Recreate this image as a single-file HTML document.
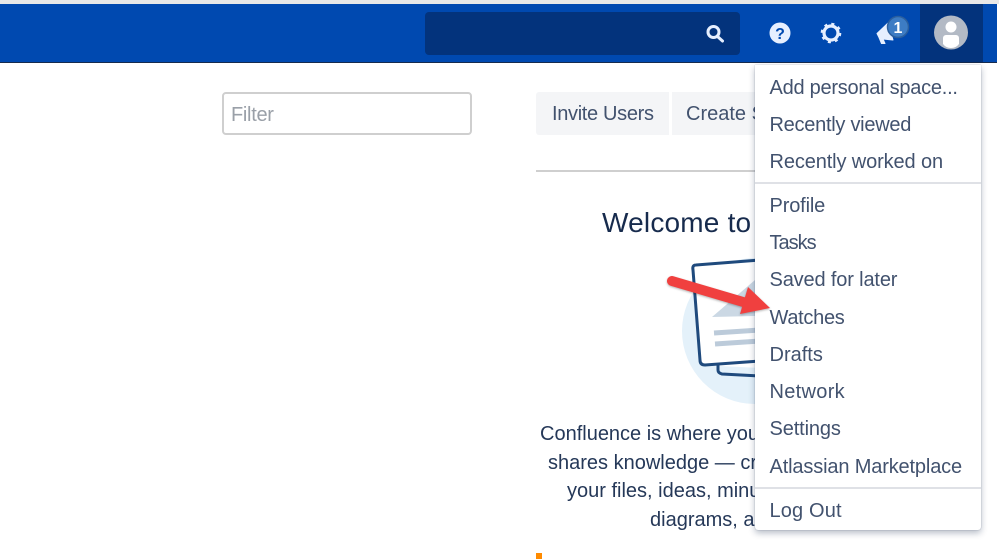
<!DOCTYPE html>
<html><head><meta charset="utf-8">
<style>
html,body{margin:0;padding:0;background:#fff;}
body{width:999px;height:559px;position:relative;overflow:hidden;font-family:"Liberation Sans",sans-serif;color:#253858;}
.a{position:absolute;white-space:nowrap;}
.mi{position:absolute;left:769.5px;font-size:20px;line-height:26px;color:#42526e;white-space:nowrap;}
.c{position:absolute;white-space:nowrap;font-size:20px;line-height:26px;color:#253858;}
</style></head><body>
<div class="a" style="left:0;top:0;width:999px;height:4px;background:#e8e8e8"></div>
<div class="a" style="left:0;top:4px;width:997px;height:58px;background:#0049b0"></div>
<div class="a" style="left:0;top:62px;width:997px;height:1px;background:#172b4d"></div>
<div class="a" style="left:425px;top:12px;width:315px;height:43px;background:#03337c;border-radius:4px"></div>
<svg class="a" style="left:0;top:0" width="999" height="64">
<g fill="none" stroke="#e6efff" stroke-width="3"><circle cx="713.500" cy="32" r="5.500"/><path d="M717.500 36.500l5 4.500" stroke-linecap="round"/></g>
<circle cx="780" cy="33" r="10.500" fill="#e6efff"/>
<text x="780" y="39" font-family="Liberation Sans" font-weight="700" font-size="16" text-anchor="middle" fill="#0049b0">?</text>
<circle cx="831" cy="33" r="7" fill="none" stroke="#e6efff" stroke-width="3.200"/>
<circle cx="831" cy="33" r="9" fill="none" stroke="#e6efff" stroke-width="2.600" stroke-dasharray="3 4.070"/>
<path d="M877 33.500L888 23L893 40L883 39L885 43.500L881.500 43.500L879 37.500Z" fill="#e6efff" stroke="#e6efff" stroke-linejoin="round"/>
<circle cx="898" cy="27" r="10.500" fill="#3d7cc4" stroke="#2b5f9e" stroke-width="1.500"/>
<text x="898" y="33" font-family="Liberation Sans" font-weight="700" font-size="16" text-anchor="middle" fill="#fff">1</text>
<rect x="920" y="4" width="63" height="58" fill="#03337c"/>
<circle cx="951" cy="32.500" r="17" fill="#b3bac5"/>
<circle cx="951" cy="27" r="5.500" fill="#fff"/>
<path d="M943 38a3 3 0 0 1 3-3h10a3 3 0 0 1 3 3v6q-3 4-8 4t-8-4z" fill="#fff"/>
</svg>

<div class="a" style="left:222px;top:92px;width:246px;height:39px;border:2px solid #cfcfcf;border-radius:4px;background:#fff"></div>
<div class="a" style="left:231px;top:102px;font-size:20px;line-height:26px;color:#9aa0a8;letter-spacing:-.3px">Filter</div>

<div class="a" style="left:536px;top:92px;width:133px;height:43px;background:#f4f5f7;border-radius:3px 0 0 3px"></div>
<div class="a" style="left:672px;top:92px;width:90px;height:43px;background:#f4f5f7"></div>
<div class="a" style="left:552px;top:101px;font-size:20px;line-height:26px;color:#42526e;letter-spacing:-.33px">Invite Users</div>
<div class="a" style="left:686px;top:101px;font-size:20px;line-height:26px;color:#42526e">Create S</div>
<div class="a" style="left:536px;top:170px;width:220px;height:2px;background:#cfcfcf"></div>

<div class="a" style="left:602px;top:205px;font-size:28px;line-height:36px;color:#172b4d;letter-spacing:.2px">Welcome to</div>

<svg class="a" style="left:660px;top:250px" width="110" height="160">
<circle cx="95" cy="81" r="73" fill="#e4f1fa"/>
<path d="M34 14L100 10V118L40 115Z" fill="#fff"/>
<path d="M100 10L36 15Q32 15 33 20L40 110Q40 115 45 115L100 111" fill="none" stroke="#1f4a7d" stroke-width="3"/>
<path d="M58 115L58 120Q58 123 62 124L100 126" fill="none" stroke="#1f4a7d" stroke-width="3"/>
<path d="M52 67L95 30V66Z" fill="#cbd8e4"/>
<path d="M54 83L100 80M55 94L100 91" stroke="#bccbda" stroke-width="5" fill="none"/>
</svg>

<div class="c" style="left:540px;top:421px">Confluence is where you</div>
<div class="c" style="left:548px;top:450px">shares knowledge — cr</div>
<div class="c" style="left:567px;top:478px">your files, ideas, minu</div>
<div class="c" style="left:650px;top:507px">diagrams, a</div>
<div class="a" style="left:536px;top:553px;width:6px;height:6px;background:#ff8b00"></div>

<div class="a" style="left:755px;top:65px;width:226px;height:465px;background:#fff;border-radius:0 0 3px 3px;box-shadow:0 3px 7px rgba(9,30,66,.3),0 0 1px rgba(9,30,66,.4)"></div>
<div class="a" style="left:755px;top:182px;width:226px;height:2px;background:#dfe1e6"></div>
<div class="a" style="left:755px;top:487px;width:226px;height:2px;background:#dfe1e6"></div>
<div class="mi" style="top:75px;letter-spacing:-.25px">Add personal space...</div>
<div class="mi" style="top:112px;letter-spacing:-.27px">Recently viewed</div>
<div class="mi" style="top:149px;letter-spacing:-.12px">Recently worked on</div>
<div class="mi" style="top:193px;letter-spacing:-.15px">Profile</div>
<div class="mi" style="top:230px;letter-spacing:-1px">Tasks</div>
<div class="mi" style="top:267px;letter-spacing:-.15px">Saved for later</div>
<div class="mi" style="top:305px;letter-spacing:-.3px">Watches</div>
<div class="mi" style="top:342px">Drafts</div>
<div class="mi" style="top:379px;letter-spacing:.3px">Network</div>
<div class="mi" style="top:416px;letter-spacing:-.12px">Settings</div>
<div class="mi" style="top:454px;letter-spacing:-.15px">Atlassian Marketplace</div>
<div class="mi" style="top:498px;letter-spacing:.15px">Log Out</div>

<svg class="a" style="left:660px;top:270px;filter:drop-shadow(0 1px 1px rgba(0,0,0,.3))" width="115" height="50">
<path d="M12 11L90 34" stroke="#f0403f" stroke-width="10" stroke-linecap="round" fill="none"/>
<path d="M88 17L110 38L80 44Z" fill="#f0403f"/>
</svg>
</body></html>
